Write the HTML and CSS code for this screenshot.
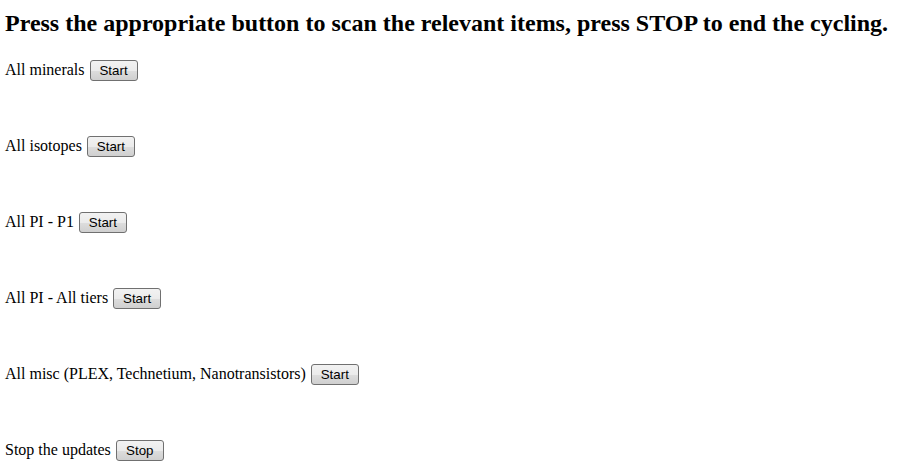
FILE: index.html
```html
<!DOCTYPE html>
<html lang="en">
<head>
    <meta charset="UTF-8">
    <title>Scanner</title>
    <link rel="stylesheet" href="styles.css">
</head>
<body>
    <h2 class="intro">Press the appropriate button to scan the relevant items, press STOP to end the cycling.</h2>
    <div class="scans">
        <div class="scan-row">All minerals <button class="scan-btn">Start</button></div>
        <div class="scan-row">All isotopes <button class="scan-btn">Start</button></div>
        <div class="scan-row">All PI - P1 <button class="scan-btn">Start</button></div>
        <div class="scan-row">All PI - All tiers <button class="scan-btn">Start</button></div>
        <div class="scan-row">All misc (PLEX, Technetium, Nanotransistors) <button class="scan-btn">Start</button></div>
        <div class="scan-row">Stop the updates <button class="scan-btn">Stop</button></div>
    </div>
</body>
</html>
```
FILE: styles.css
```css
body {
    margin: 0;
    padding: 10px 5px;
    font-family: "Liberation Serif", "Times New Roman", serif;
    font-size: 16px;
    color: #000;
    background: #fff;
}
.intro {
    font-size: 24px;
    font-weight: bold;
    margin: 0 0 22px;
    line-height: 27px;
}
.scans {
    display: flex;
    flex-direction: column;
    gap: 55px;
}
.scan-row {
    line-height: 21px;
    height: 21px;
}
.scan-btn {
    font-family: Arial, "Liberation Sans", sans-serif;
    font-size: 13.33px;
    width: 48px;
    height: 21px;
    padding: 0;
    margin: 0 0 0 1px;
    border: 1px solid #707070;
    border-radius: 3px;
    background: linear-gradient(#f2f2f2 0%, #ebebeb 50%, #dddddd 51%, #cfcfcf 100%);
    color: #000;
    vertical-align: baseline;
}
```
